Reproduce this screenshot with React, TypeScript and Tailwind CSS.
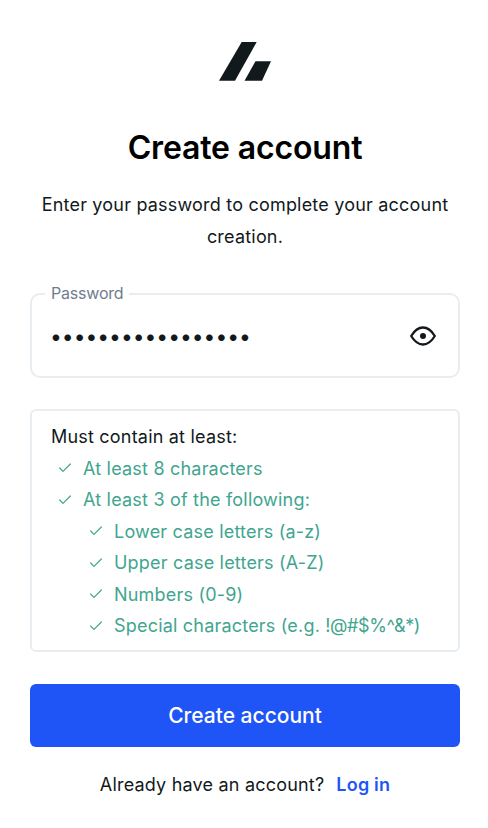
import { Check } from 'lucide-react'

const RULES = [
  { label: 'At least 8 characters', nested: false },
  { label: 'At least 3 of the following:', nested: false },
  { label: 'Lower case letters (a-z)', nested: true },
  { label: 'Upper case letters (A-Z)', nested: true },
  { label: 'Numbers (0-9)', nested: true },
  {
    label: (
      <span>
        Special characters (e.g. <span className="tracking-[-0.4px]">!@#$%^&*</span>)
      </span>
    ),
    nested: true,
  },
]

function Logo() {
  return (
    <svg width="52" height="40" viewBox="0 0 52 40" fill="#12191c">
      <path d="M22.700 0H37.700L16 38.700H0Z" />
      <path d="M36.500 19.300H52L43 38.700H25.500Z" />
    </svg>
  )
}

function Eye() {
  return (
    <svg width="26" height="26" viewBox="0 0 26 26" fill="none" stroke="#12191c" strokeWidth="2.300" strokeLinejoin="round">
      <path d="M1.200 13C4.500 7.500 8.500 4.500 13 4.500s8.500 3 11.800 8.500C21.500 18.500 17.500 21.500 13 21.500S4.500 18.500 1.200 13Z" />
      <circle cx="13" cy="13" r="3" fill="#12191c" stroke="none" />
    </svg>
  )
}

export default function App() {
  return (
    <div className="min-h-[828px] bg-white pt-[42px] pr-[28px] pl-[30px] font-['Inter',sans-serif] tracking-[0.2px] text-[#12191c]">
      <div className="flex justify-center">
        <Logo />
      </div>

      <h1 className="mt-[42px] text-center text-[32px] leading-[48px] font-semibold tracking-[-0.15px] text-black">Create account</h1>
      <p className="mt-[17px] text-center text-[18px] leading-[32px]">
        Enter your password to complete your account creation.
      </p>

      <fieldset className="mt-[30px] flex h-[95px] items-center rounded-[10px] border-2 border-[#e8edf2]">
        <legend className="ml-[13px] px-[6px] pb-[2px] text-[16px] leading-[20px] tracking-[-0.2px] text-[#6f7d8f]">Password</legend>
        <div className="flex w-full items-center justify-between pr-[22px] pb-[10px] pl-[18px]">
          <span className="pt-[2px] text-[21px] leading-[32px] tracking-[0px]">•••••••••••••••••</span>
          <Eye />
        </div>
      </fieldset>

      <div className="mt-[31px] rounded-[6px] border-2 border-[#e8edf2] px-[19px] pt-[10px] pb-[8px]">
        <p className="text-[18px] leading-[31.500px]">Must contain at least:</p>
        <ul className="text-[18px] leading-[31.500px] text-[#41a58f]">
          {RULES.map((r, i) => (
            <li key={i} className={`flex items-center gap-[10px] ${r.nested ? 'pl-[37px]' : 'pl-[6px]'}`}>
              <Check size={16} strokeWidth={1.800} />
              {r.label}
            </li>
          ))}
        </ul>
      </div>

      <button className="mt-[32px] h-[63px] w-full rounded-[6px] bg-[#1f55f6] pt-[1px] text-[21px] font-medium tracking-[0px] text-white">
        Create account
      </button>

      <p className="mt-[22px] text-center text-[18px] leading-[32px]">
        Already have an account?
        <a className="ml-[12px] font-semibold text-[#1f55f6]">Log in</a>
      </p>
    </div>
  )
}
